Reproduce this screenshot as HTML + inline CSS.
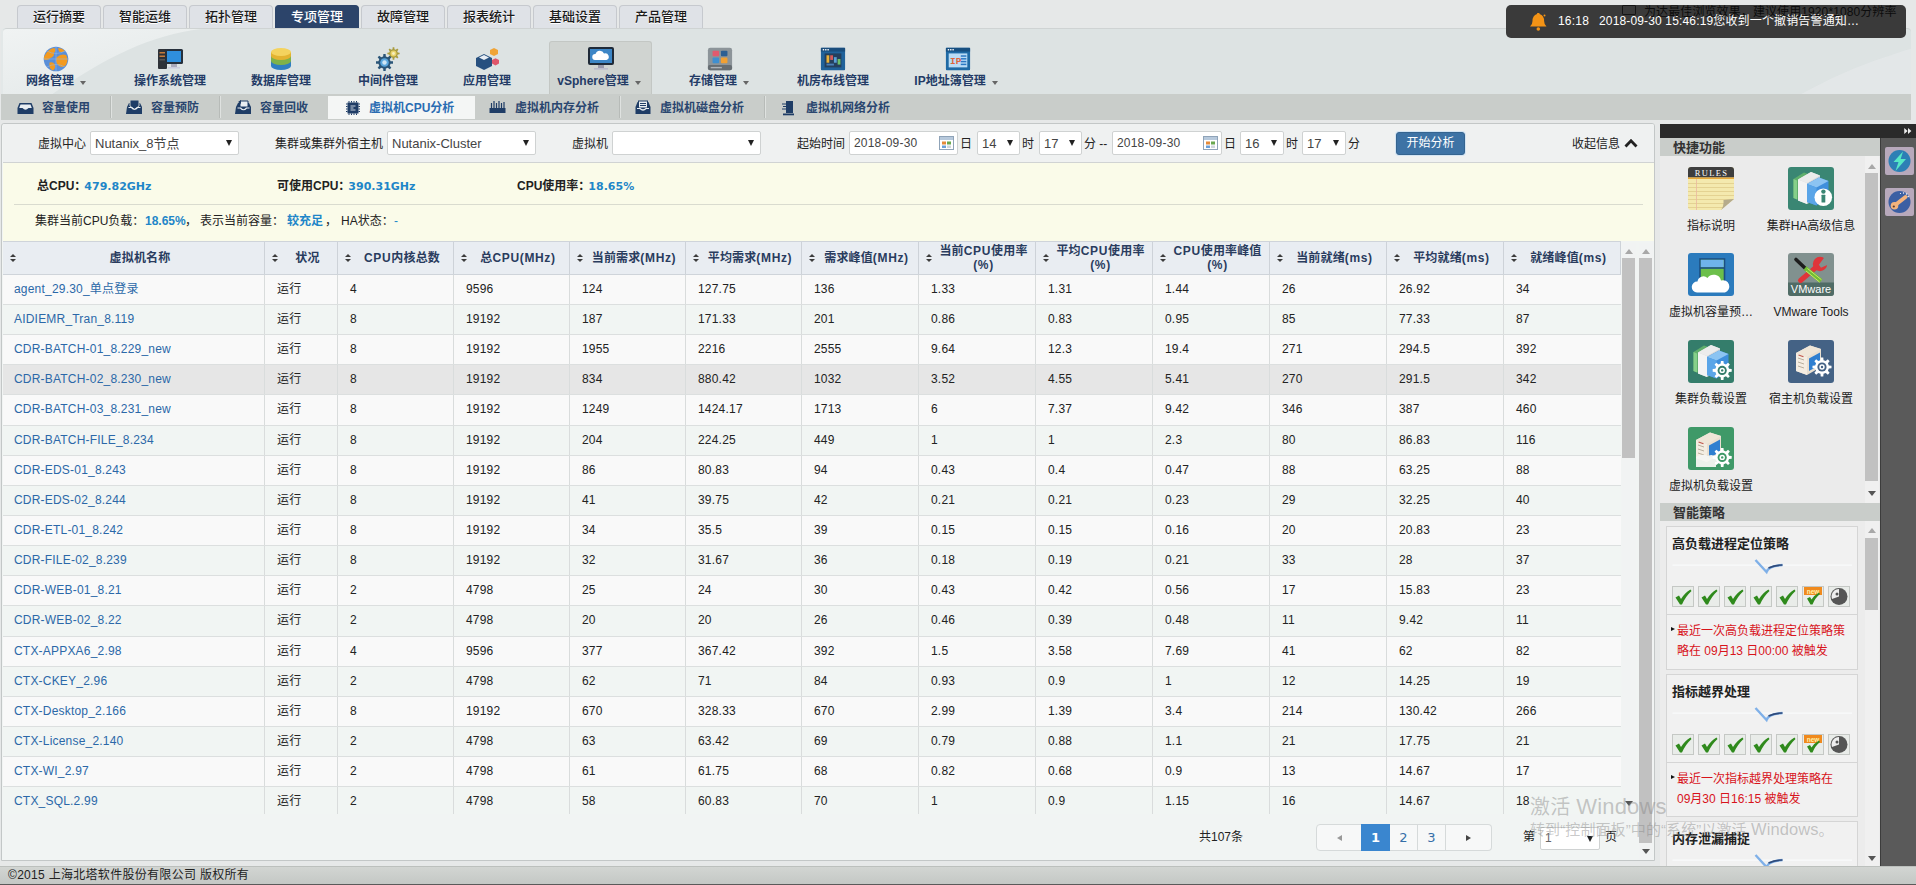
<!DOCTYPE html>
<html lang="zh-CN">
<head>
<meta charset="utf-8">
<title>虚拟机CPU分析</title>
<style>
*{box-sizing:border-box;margin:0;padding:0}
html,body{width:1916px;height:885px;overflow:hidden}
body{position:relative;background:#e6e8e8;font:12px/1.2 "Liberation Sans","Noto Sans CJK SC",sans-serif;color:#222}
.abs{position:absolute}
/* top tabs */
.tab{position:absolute;top:5px;height:23px;width:84px;border:1px solid #c6c9ce;border-bottom:none;border-radius:4px 4px 0 0;background:#dfe2e7;text-align:center;font-size:13px;line-height:22.500px;color:#1a1a1a;font-weight:500;text-shadow:0 1px 0 #fff}
.tab.on{background:#2c446a;border-color:#2c446a;color:#fff;text-shadow:none}
/* menu panel */
#menu{position:absolute;left:3px;top:28px;width:1908px;height:66px;background:#dde3e3;box-shadow:-2px 0 0 #e3e8e8;border-top:1px solid #cfd3d3;border-radius:4px 4px 0 0;overflow:hidden}
#menu .curve{position:absolute;left:-70px;top:-14px;width:580px;height:140px;border-radius:50%;background:#e6eaea;transform:rotate(-14deg);opacity:.8}
.mi{position:absolute;top:0;height:66px;text-align:center;color:#233b66;font-weight:bold;font-size:12px}
.mi .ic{position:absolute;left:50%;top:16px;width:28px;height:28px;margin-left:-14px}
.mi .lb{position:absolute;left:0;right:0;top:44px;white-space:nowrap;line-height:16px}
.mi .ar{display:inline-block;width:0;height:0;border:3px solid transparent;border-top:4px solid #666;margin-left:6px;vertical-align:-3px}
.mi.on{background:#d0d4d1;border:1px solid #c3c7c4;border-bottom:none;border-radius:3px 3px 0 0}
/* subnav */
#sub{position:absolute;left:3px;top:94px;width:1908px;height:26px;background:#c9cdca;box-shadow:-2px 0 0 #c9cdca}
.si{position:absolute;top:1px;height:24px;line-height:26px;color:#2a466f;font-weight:bold;font-size:12px;white-space:nowrap}
.si.on{background:#f4f6f5;color:#2a6cb2}
.si svg{position:absolute;top:5px}
.sep{position:absolute;top:2px;width:1px;height:22px;background:#dfe2e0;border-left:1px solid #b7bbb8;width:2px}
/* main */
#main{position:absolute;left:1px;top:123px;width:1654px;height:738px;background:#f1f4f3;border:1px solid #c3c7c7;border-radius:3px 3px 0 0;overflow:hidden}
#filter{position:absolute;left:0;top:0;width:100%;height:39px;background:#eff1f1;border-bottom:1px solid #d0d3d3}
#filter .lab{position:absolute;top:12px;line-height:16px;white-space:nowrap;color:#222}
.sel{position:absolute;top:7px;height:24px;border:1px solid #cfd2d2;border-radius:2px;background:#fff;line-height:23px;padding-left:4px;color:#444;white-space:nowrap}
.sel:after{content:"";position:absolute;right:6px;top:8px;border:3.5px solid transparent;border-top:6px solid #222;}
.sel.in:after{display:none}
#info{position:absolute;left:0;top:39px;width:100%;height:78px;background:#fafbe9}
#info .l1{position:absolute;top:15px;font-weight:bold;white-space:nowrap;line-height:16px;color:#222}
#info .l1 b{color:#1e86c8;font-family:"DejaVu Sans","Liberation Sans",sans-serif;font-size:11px;margin-left:-2px}#info .l2 b{color:#1e86c8;font-size:12px}
#info hr{position:absolute;left:11px;right:11px;top:41px;border:none;border-top:1px solid #d9dbcf}
#info .l2{position:absolute;top:50px;left:31px;white-space:nowrap;line-height:16px}
.thead{position:absolute;left:0;top:117px;width:1618px;height:34px;background:#e9edf2;border-top:1px solid #cfd4da;border-bottom:1px solid #cfd4da}
.th{position:absolute;top:0;height:32px;border-right:1px solid #cdd2d8;color:#2a3c5e;font-weight:bold;text-align:center;line-height:32px;white-space:nowrap;padding-left:13px;letter-spacing:.15px}
.th.two{line-height:14px;padding-top:2px}
.th span{display:inline-block}.th span.la{display:inline;letter-spacing:.65px}
.sort{position:absolute;left:7px;top:12px;width:7px;height:9px}
.sort:before{content:"";position:absolute;left:0;top:0;border:3.200px solid transparent;border-bottom:3.600px solid #3c3c3c;border-top:none}
.sort:after{content:"";position:absolute;left:0;top:5px;border:3.200px solid transparent;border-top:3.600px solid #3c3c3c;border-bottom:none}
.tr{position:absolute;left:0;width:1618px;border-bottom:1px solid #dcdfdf}
.tr.odd{background:#f9f9f9}.tr.even{background:#f1f5f3}.tr.hov{background:#e6e6e6}
.td{position:absolute;top:0;bottom:0;border-right:1px solid #d9dcdc;padding-left:12px;line-height:29px;white-space:nowrap;color:#222;letter-spacing:.2px}
.td:last-child{border-right:none}
.td.nm{color:#2b68a8;padding-left:11px}
/* scrollbars */
.sb{position:absolute;width:14px;background:#f1f3f3}
.sb .thumb{position:absolute;left:0;width:13px;background:#c1c1c1}
.sb .up,.sb .dn{position:absolute;left:3px;border:4px solid transparent}
.sb .up{border-bottom:5px solid #a8a8a8;border-top:none}
.sb .dn{border-top:5px solid #555;border-bottom:none}
/* pager */
.pg{position:absolute;top:700px;height:27px;border:1px solid #d6dada;background:#f7f8f8;text-align:center;line-height:25px;font-size:13px;font-family:"DejaVu Sans","Liberation Sans",sans-serif;color:#356fa8}
/* right */
#right{position:absolute;left:1660px;top:124px;width:256px;height:742px;background:#ebebeb}
#right .bar{position:absolute;left:0;top:0;width:256px;height:14px;background:#2a2a2a}
#strip{position:absolute;left:220px;top:14px;width:36px;height:728px;background:#5a5a5a;border-left:1px solid #3c3c3c}
.sbtn{position:absolute;left:4px;width:29px;height:29px;background:#b8a9bc;border-radius:2px}
.sec{position:absolute;left:0;width:220px;height:18px;background:#c9cdca;font-weight:bold;color:#333;line-height:19px;padding-left:13px;font-size:13px}
.qi{position:absolute;width:46px;height:43px}
.ql{position:absolute;width:110px;text-align:center;white-space:nowrap;line-height:16px;color:#222}
.card{position:absolute;left:6px;width:192px;background:#f1f1f1;border:1px solid #d5d5d5}
.card .t{position:absolute;left:5px;top:9px;font-size:13px;font-weight:bold;color:#222;white-space:nowrap;line-height:16px}
.card .red{position:absolute;left:10px;color:#d8131b;line-height:20px;white-space:nowrap}
.chk{position:absolute;width:22px;height:21px;background:#e9ece9;border:1px solid #c5c8c5}
#foot{position:absolute;left:0;top:866px;width:1916px;height:19px;background:linear-gradient(#d2d5d2,#c4c8c5);border-top:1px solid #bcc0bd;border-bottom:1px solid #5a5a5a;line-height:16px;padding-left:8px;color:#222;letter-spacing:.3px}
</style>
</head>
<body>
<!-- top tabs -->
<div class="tab" style="left:17px">运行摘要</div>
<div class="tab" style="left:103px">智能运维</div>
<div class="tab" style="left:189px">拓扑管理</div>
<div class="tab on" style="left:275px">专项管理</div>
<div class="tab" style="left:361px">故障管理</div>
<div class="tab" style="left:447px">报表统计</div>
<div class="tab" style="left:533px">基础设置</div>
<div class="tab" style="left:619px">产品管理</div>

<div id="menu"><svg class="abs" style="left:-2px;top:0" width="220" height="66" viewBox="0 0 220 66"><defs><linearGradient id="mg" x1="0" y1="0" x2="0.700" y2="1"><stop offset="0" stop-color="#f0f3f3"/><stop offset="1" stop-color="#e4e9e9"/></linearGradient></defs><path d="M0 0 H200 C150 6 105 28 50 66 H0z" fill="url(#mg)"/></svg><div class="abs" style="left:1530px;top:0;width:1040px;height:1040px;border-radius:50%;background:#e4e7e9;opacity:.85"></div>
<div class="mi" style="left:-7px;width:120px"><svg class="ic" viewBox="0 0 28 28"><circle cx="14" cy="14" r="12.300" fill="#5a8fd8"/><path d="M4 8.500 q3 -5 8.500 -5.500 q2 2.500 -0.500 5 q0.500 3.500 -3.500 5 q-2.500 3 -6.500 1.500 q-0.500 -3 2 -6z M14.500 12.500 q4 -4 9.500 -2.500 q3 4.500 0 10 q-4 3.500 -7.500 0.500 q-3.500 -3.500 -2 -8z M7.500 17.500 q3.500 -1 5.500 2 q0.500 4.500 -2 6 q-4.500 -2 -3.500 -8z M16 3 q4 0 7 3 q-3 2 -6 0.500z" fill="#f39a1f"/><path d="M14 1.700 V26.300 M1.700 14 H26.300 M5 6 Q14 11 23 6 M5 22 Q14 17 23 22" stroke="#8db8ee" stroke-width="0.700" fill="none" opacity="0.800"/></svg><div class="lb">网络管理<i class="ar"></i></div></div>
<div class="mi" style="left:107px;width:120px"><svg class="ic" viewBox="0 0 28 28"><rect x="2" y="4" width="9" height="20" rx="1" fill="#2e3238"/><rect x="3.5" y="7" width="6" height="1.5" fill="#c57a3a"/><rect x="3.5" y="10.5" width="6" height="1.5" fill="#c57a3a"/><rect x="3.5" y="14" width="6" height="1.5" fill="#555"/><rect x="9" y="4" width="18" height="15" rx="1.5" fill="#26303c"/><rect x="11" y="6" width="14" height="11" fill="#2f8fdd"/><rect x="15" y="19" width="6" height="3" fill="#aab"/><rect x="12" y="22" width="12" height="1.5" fill="#ccd"/></svg><div class="lb">操作系统管理</div></div>
<div class="mi" style="left:218px;width:120px"><svg class="ic" viewBox="0 0 28 28"><ellipse cx="14" cy="21" rx="10" ry="4" fill="#2f7fc2"/><rect x="4" y="16" width="20" height="5" fill="#2f7fc2"/><ellipse cx="14" cy="16" rx="10" ry="4" fill="#7fb24a"/><rect x="4" y="11" width="20" height="5" fill="#7fb24a"/><ellipse cx="14" cy="11" rx="10" ry="4" fill="#e3b330"/><rect x="4" y="7" width="20" height="4" fill="#e3b330"/><ellipse cx="14" cy="7" rx="10" ry="4" fill="#f4d35e"/></svg><div class="lb">数据库管理</div></div>
<div class="mi" style="left:325px;width:120px"><svg class="ic" viewBox="0 0 28 28"><path d="M23.79 7.54 L25.64 7.67 L25.64 9.33 L23.79 9.46 L23.22 10.86 L24.43 12.26 L23.26 13.43 L21.86 12.22 L20.46 12.79 L20.33 14.64 L18.67 14.64 L18.54 12.79 L17.14 12.22 L15.74 13.43 L14.57 12.26 L15.78 10.86 L15.21 9.46 L13.36 9.33 L13.36 7.67 L15.21 7.54 L15.78 6.14 L14.57 4.74 L15.74 3.57 L17.14 4.78 L18.54 4.21 L18.67 2.36 L20.33 2.36 L20.46 4.21 L21.86 4.78 L23.26 3.57 L24.43 4.74 L23.22 6.14z" fill="#a99c3f"/><circle cx="19.5" cy="8.500" r="3" fill="#e9d36a"/><circle cx="19.5" cy="8.500" r="1.400" fill="#f6efc0"/><path d="M16.55 16.15 L19.02 16.36 L19.02 18.64 L16.55 18.85 L15.73 20.82 L17.34 22.72 L15.72 24.34 L13.82 22.73 L11.85 23.55 L11.64 26.02 L9.36 26.02 L9.15 23.55 L7.18 22.73 L5.28 24.34 L3.66 22.72 L5.27 20.82 L4.45 18.85 L1.98 18.64 L1.98 16.36 L4.45 16.15 L5.27 14.18 L3.66 12.28 L5.28 10.66 L7.18 12.27 L9.15 11.45 L9.36 8.98 L11.64 8.98 L11.85 11.45 L13.82 12.27 L15.72 10.66 L17.34 12.28 L15.73 14.18z" fill="#2a5578"/><circle cx="10.500" cy="17.500" r="4.300" fill="#5aa6dc"/><circle cx="10.500" cy="17.500" r="2.200" fill="#cfe6f5"/></svg><div class="lb">中间件管理</div></div>
<div class="mi" style="left:424px;width:120px"><svg class="ic" viewBox="0 0 28 28"><path d="M3 13 l8 -4 l8 4 v8 l-8 4 l-8 -4z" fill="#27507f"/><path d="M6 12.5 l5 -2.5 l5 2.5 l-5 2.5z" fill="#e8eef5"/><path d="M17 5 l4 -2 l4 2 v4 l-4 2 l-4 -2z" fill="#f0a437"/><path d="M19 15 l3.500 -1.8 l3.500 1.800 v3.600 l-3.500 1.800 l-3.500 -1.800z" fill="#e0566b"/></svg><div class="lb">应用管理</div></div>
<div class="mi on" style="left:546px;width:103px;top:12px;height:54px"><div style="position:absolute;left:0;right:0;top:-13px;height:66px"><svg class="ic" viewBox="0 0 28 28"><rect x="1" y="2" width="26" height="18" rx="2" fill="#1f2a38"/><rect x="3" y="4" width="22" height="14" fill="#3d86c6"/><path d="M8 15 a3 3 0 0 1 0.500 -6 a4.500 4.500 0 0 1 8.500 -0.500 a3.300 3.300 0 0 1 2.500 6.500z" fill="#fff"/><rect x="11" y="20" width="6" height="3" fill="#99a"/><rect x="7" y="23" width="14" height="1.6" fill="#bbc"/></svg><div class="lb" style="padding-left:0;margin-left:-3px">vSphere管理<i class="ar"></i></div></div></div>
<div class="mi" style="left:656px;width:120px"><svg class="ic" style="transform:translate(1px,0) scale(.93)" viewBox="0 0 28 28"><rect x="1" y="2" width="26" height="24" rx="2.500" fill="#8c9499"/><rect x="6" y="5" width="7" height="6" rx="1" fill="#e25a6e"/><rect x="15" y="5" width="7" height="6" rx="1" fill="#2c5f93"/><rect x="6" y="12.500" width="7" height="6" rx="1" fill="#3f8fd0"/><rect x="15" y="12.500" width="7" height="6" rx="1" fill="#f1a033"/><rect x="1" y="20.500" width="26" height="5.500" rx="2" fill="#666d72"/><rect x="4" y="22.500" width="12" height="1.500" fill="#aeb4b8"/></svg><div class="lb">存储管理<i class="ar"></i></div></div>
<div class="mi" style="left:770px;width:120px"><svg class="ic" style="transform:scale(.93)" viewBox="0 0 28 28"><rect x="1" y="2" width="26" height="24" rx="1" fill="#20629a"/><rect x="1" y="2" width="26" height="4" fill="#1a4d7c"/><rect x="3" y="3.300" width="1.500" height="1.500" fill="#fff"/><rect x="5.500" y="3.300" width="1.500" height="1.500" fill="#fff"/><rect x="8" y="3.300" width="1.500" height="1.500" fill="#fff"/><rect x="5" y="8" width="18" height="15" fill="#253f5c"/><rect x="7" y="10" width="3" height="8" fill="#e8b23a"/><rect x="11" y="10" width="3" height="5" fill="#d65a5a"/><rect x="15" y="12" width="3" height="6" fill="#5aa0d6"/><rect x="19" y="14" width="3" height="6" fill="#6abf6a"/><rect x="7" y="19" width="8" height="2" fill="#4a7fb5"/></svg><div class="lb">机房布线管理</div></div>
<div class="mi" style="left:893px;width:120px"><svg class="ic" style="transform:translate(2px,0) scale(.93)" viewBox="0 0 28 28"><rect x="1" y="2" width="26" height="24" rx="1" fill="#1f6aa5"/><rect x="1" y="2" width="26" height="4" fill="#174f80"/><rect x="3" y="3.300" width="1.500" height="1.500" fill="#fff"/><rect x="5.500" y="3.300" width="1.500" height="1.500" fill="#fff"/><rect x="8" y="3.300" width="1.500" height="1.500" fill="#fff"/><rect x="4" y="8" width="20" height="15" fill="#b9dcf6"/><text x="5.500" y="19.500" font-family="Liberation Mono,monospace" font-size="10" font-weight="bold" fill="#e0643a">IP</text><rect x="17" y="10" width="6" height="1.600" fill="#2b78c2"/><rect x="17" y="13" width="6" height="1.600" fill="#2b78c2"/><rect x="17" y="16" width="6" height="1.600" fill="#2b78c2"/><rect x="17" y="19" width="6" height="1.600" fill="#2b78c2"/></svg><div class="lb">IP地址簿管理<i class="ar"></i></div></div>
</div>
<div id="sub">
<div class="si on" style="left:325px;width:147px;top:2px;height:23px"></div>
<div class="si" style="left:0;width:0;"><svg width="17" height="15" viewBox="0 0 17 15" style="left:14px"><path d="M2.500 3 h12 l2 5 v6 h-16 v-6z" fill="#1f3d66"/><path d="M3.500 4.500 h10 l1.300 3.500 h-3.300 q-3 3.500 -6 0 h-3.300z" fill="#e9eef2"/></svg><span style="position:absolute;left:39px;top:0">容量使用</span></div>
<div class="si" style="left:0;width:0;"><svg width="17" height="16" viewBox="0 0 17 16" style="left:123px;top:4px"><path d="M1 8 l2 -4 h11 l2 4 v7 h-16z" fill="#1f3d66"/><path d="M4 1 h9 v6 l-4.500 3.500 l-4.500 -3.500z" fill="#1f3d66" stroke="#c9cdca" stroke-width="1"/><path d="M2.500 8.500 h3 q3 3.500 6 0 h3" fill="none" stroke="#e9eef2" stroke-width="1.200"/></svg><span style="position:absolute;left:148px;top:0">容量预防</span></div>
<div class="si" style="left:0;width:0;"><svg width="17" height="16" viewBox="0 0 17 16" style="left:232px;top:4px"><path d="M1 8 l2 -4 h11 l2 4 v7 h-16z" fill="#1f3d66"/><path d="M5 2 h8 v6 h-8z" fill="#e9eef2" stroke="#1f3d66" stroke-width="1"/><path d="M3 3 l3 -2 v4z" fill="#1f3d66"/><path d="M2.500 9 h3 q3 3.500 6 0 h3" fill="none" stroke="#e9eef2" stroke-width="1.200"/></svg><span style="position:absolute;left:257px;top:0">容量回收</span></div>
<div class="si on" style="left:0;width:0;background:none;"><svg width="16" height="16" viewBox="0 0 16 16" style="left:342px"><rect x="2.500" y="2.500" width="11" height="11" fill="#1f3d66"/><path d="M1 4h1.500M1 6.500h1.500M1 9h1.500M1 11.500h1.500M13.500 4h1.500M13.500 6.500h1.500M13.500 9h1.500M13.500 11.500h1.500M4 1v1.500M6.500 1v1.500M9 1v1.500M11.500 1v1.500M4 13.500v1.500M6.500 13.500v1.500M9 13.500v1.500M11.500 13.500v1.500" stroke="#1f3d66" stroke-width="1"/><path d="M5.500 6h5M5.500 8h3M5.500 10h5" stroke="#dfe6ee" stroke-width="0.900"/></svg><span style="position:absolute;left:366px;top:0">虚拟机CPU分析</span></div>
<div class="si" style="left:0;width:0;"><svg width="17" height="15" viewBox="0 0 17 15" style="left:486px;top:5px"><rect x="0.500" y="8" width="16" height="5" fill="#1f3d66"/><path d="M2.500 3v5M5 1v7M7.500 3v5M10 1v7M12.500 3v5M15 2v6" stroke="#1f3d66" stroke-width="1.200"/></svg><span style="position:absolute;left:512px;top:0">虚拟机内存分析</span></div>
<div class="si" style="left:0;width:0;"><svg width="16" height="15" viewBox="0 0 16 15" style="left:632px"><path d="M0.500 7 l2 -5 h11 l2 5 v7 h-15z" fill="#1f3d66"/><rect x="3.500" y="1" width="9" height="7" fill="#e9eef2" stroke="#1f3d66"/><path d="M5 3.500h6M5 5.500h6" stroke="#1f3d66" stroke-width="1"/><path d="M2 8.500 h3 q3 3 6 0 h3" fill="none" stroke="#e9eef2" stroke-width="1.200"/></svg><span style="position:absolute;left:657px;top:0">虚拟机磁盘分析</span></div>
<div class="si" style="left:0;width:0;"><svg width="14" height="16" viewBox="0 0 14 16" style="left:778px"><rect x="5" y="1" width="7" height="12" fill="#1f3d66"/><path d="M1 4h4M2 6.500h3M1 9h4" stroke="#1f3d66" stroke-width="1"/><rect x="2" y="13.500" width="11" height="1.800" fill="#1f3d66"/></svg><span style="position:absolute;left:803px;top:0">虚拟机网络分析</span></div>
<div class="sep" style="left:107px"></div>
<div class="sep" style="left:216px"></div>
<div class="sep" style="left:616px"></div>
<div class="sep" style="left:761px"></div>
</div>

<div id="main"><div class="abs" style="left:1px;top:0;width:1651px;height:736px">
<div id="filter">
<div class="lab" style="left:35px">虚拟中心</div>
<div class="sel" style="left:87px;width:149px;font-size:13px">Nutanix_8节点</div>
<div class="lab" style="left:272px">集群或集群外宿主机</div>
<div class="sel" style="left:384px;width:149px;font-size:13px">Nutanix-Cluster</div>
<div class="lab" style="left:569px">虚拟机</div>
<div class="sel" style="left:609px;width:149px;font-size:13px"></div>
<div class="lab" style="left:794px">起始时间</div>
<div class="sel in" style="left:846px;width:109px;font-size:12px;letter-spacing:.2px">2018-09-30<svg width="15" height="14" viewBox="0 0 15 14" style="position:absolute;right:3px;top:4px"><rect x="0.500" y="0.500" width="14" height="13" fill="#fff" stroke="#8fa3b8"/><rect x="1" y="1" width="13" height="3" fill="#b7c9dc"/><rect x="3" y="5.500" width="4" height="3" fill="#e58b3a"/><rect x="8" y="5.500" width="4" height="3" fill="#6aa84f"/><rect x="3" y="9.500" width="4" height="2.500" fill="#6a9fd8"/><rect x="8" y="9.500" width="4" height="2.500" fill="#d0d6dc"/></svg></div>
<div class="lab" style="left:957px">日</div>
<div class="sel" style="left:974px;width:43px;font-size:13px">14</div>
<div class="lab" style="left:1019px">时</div>
<div class="sel" style="left:1036px;width:43px;font-size:13px">17</div>
<div class="lab" style="left:1081px">分 --</div>
<div class="sel in" style="left:1109px;width:110px;font-size:12px;letter-spacing:.2px">2018-09-30<svg width="15" height="14" viewBox="0 0 15 14" style="position:absolute;right:3px;top:4px"><rect x="0.500" y="0.500" width="14" height="13" fill="#fff" stroke="#8fa3b8"/><rect x="1" y="1" width="13" height="3" fill="#b7c9dc"/><rect x="3" y="5.500" width="4" height="3" fill="#e58b3a"/><rect x="8" y="5.500" width="4" height="3" fill="#6aa84f"/><rect x="3" y="9.500" width="4" height="2.500" fill="#6a9fd8"/><rect x="8" y="9.500" width="4" height="2.500" fill="#d0d6dc"/></svg></div>
<div class="lab" style="left:1221px">日</div>
<div class="sel" style="left:1237px;width:44px;font-size:13px">16</div>
<div class="lab" style="left:1283px">时</div>
<div class="sel" style="left:1299px;width:44px;font-size:13px">17</div>
<div class="lab" style="left:1345px">分</div>
<div class="abs" style="left:1393px;top:8px;width:69px;height:23px;background:#3e73a5;border:1px solid #35648f;border-radius:3px;box-shadow:0 0 0 1px #d3e4f3;color:#fff;text-align:center;line-height:21px;font-size:12px">开始分析</div>
<div class="lab" style="left:1569px">收起信息</div>
<svg class="abs" style="left:1621px;top:14px" width="14" height="10" viewBox="0 0 14 10"><path d="M1.500 8.500 L7 2.800 L12.500 8.500" fill="none" stroke="#222" stroke-width="2.800"/></svg>
</div>
<div id="info">
<div class="l1" style="left:34px">总CPU：<b>479.82GHz</b></div>
<div class="l1" style="left:274px">可使用CPU：<b>390.31GHz</b></div>
<div class="l1" style="left:514px">CPU使用率：<b>18.65%</b></div>
<hr>
<div class="l2" style="left:0;top:50px"><span class="abs" style="left:32px">集群当前CPU负载：</span><b class="abs" style="left:142px">18.65%</b><span class="abs" style="left:182px">，</span><span class="abs" style="left:197px">表示当前容量：</span><b class="abs" style="left:284px">较充足</b><span class="abs" style="left:322px">，</span><span class="abs" style="left:338px">HA状态：</span><span class="abs" style="left:391px;color:#1e86c8">-</span></div>
</div>
<div class="thead">
<div class="th" style="left:0px;width:262px"><i class="sort"></i><span>虚拟机名称</span></div>
<div class="th" style="left:262px;width:73px"><i class="sort"></i><span>状况</span></div>
<div class="th" style="left:335px;width:116px"><i class="sort"></i><span><span class="la">CPU</span>内核总数</span></div>
<div class="th" style="left:451px;width:116px"><i class="sort"></i><span>总<span class="la">CPU(MHz)</span></span></div>
<div class="th" style="left:567px;width:116px"><i class="sort"></i><span>当前需求<span class="la">(MHz)</span></span></div>
<div class="th" style="left:683px;width:116px"><i class="sort"></i><span>平均需求<span class="la">(MHz)</span></span></div>
<div class="th" style="left:799px;width:117px"><i class="sort"></i><span>需求峰值<span class="la">(MHz)</span></span></div>
<div class="th two" style="left:916px;width:117px"><i class="sort"></i><span>当前<span class="la">CPU</span>使用率<br><span class="la">(%)</span></span></div>
<div class="th two" style="left:1033px;width:117px"><i class="sort"></i><span>平均<span class="la">CPU</span>使用率<br><span class="la">(%)</span></span></div>
<div class="th two" style="left:1150px;width:117px"><i class="sort"></i><span><span class="la">CPU</span>使用率峰值<br><span class="la">(%)</span></span></div>
<div class="th" style="left:1267px;width:117px"><i class="sort"></i><span>当前就绪<span class="la">(ms)</span></span></div>
<div class="th" style="left:1384px;width:117px"><i class="sort"></i><span>平均就绪<span class="la">(ms)</span></span></div>
<div class="th" style="left:1501px;width:117px"><i class="sort"></i><span>就绪峰值<span class="la">(ms)</span></span></div>
</div>
<div class="tr odd" style="top:151px;height:30px">
<div class="td nm" style="left:0px;width:262px">agent_29.30_单点登录</div>
<div class="td" style="left:262px;width:73px">运行</div>
<div class="td" style="left:335px;width:116px">4</div>
<div class="td" style="left:451px;width:116px">9596</div>
<div class="td" style="left:567px;width:116px">124</div>
<div class="td" style="left:683px;width:116px">127.75</div>
<div class="td" style="left:799px;width:117px">136</div>
<div class="td" style="left:916px;width:117px">1.33</div>
<div class="td" style="left:1033px;width:117px">1.31</div>
<div class="td" style="left:1150px;width:117px">1.44</div>
<div class="td" style="left:1267px;width:117px">26</div>
<div class="td" style="left:1384px;width:117px">26.92</div>
<div class="td" style="left:1501px;width:117px">34</div>
</div>
<div class="tr even" style="top:181px;height:30px">
<div class="td nm" style="left:0px;width:262px">AIDIEMR_Tran_8.119</div>
<div class="td" style="left:262px;width:73px">运行</div>
<div class="td" style="left:335px;width:116px">8</div>
<div class="td" style="left:451px;width:116px">19192</div>
<div class="td" style="left:567px;width:116px">187</div>
<div class="td" style="left:683px;width:116px">171.33</div>
<div class="td" style="left:799px;width:117px">201</div>
<div class="td" style="left:916px;width:117px">0.86</div>
<div class="td" style="left:1033px;width:117px">0.83</div>
<div class="td" style="left:1150px;width:117px">0.95</div>
<div class="td" style="left:1267px;width:117px">85</div>
<div class="td" style="left:1384px;width:117px">77.33</div>
<div class="td" style="left:1501px;width:117px">87</div>
</div>
<div class="tr odd" style="top:211px;height:30px">
<div class="td nm" style="left:0px;width:262px">CDR-BATCH-01_8.229_new</div>
<div class="td" style="left:262px;width:73px">运行</div>
<div class="td" style="left:335px;width:116px">8</div>
<div class="td" style="left:451px;width:116px">19192</div>
<div class="td" style="left:567px;width:116px">1955</div>
<div class="td" style="left:683px;width:116px">2216</div>
<div class="td" style="left:799px;width:117px">2555</div>
<div class="td" style="left:916px;width:117px">9.64</div>
<div class="td" style="left:1033px;width:117px">12.3</div>
<div class="td" style="left:1150px;width:117px">19.4</div>
<div class="td" style="left:1267px;width:117px">271</div>
<div class="td" style="left:1384px;width:117px">294.5</div>
<div class="td" style="left:1501px;width:117px">392</div>
</div>
<div class="tr hov" style="top:241px;height:30px">
<div class="td nm" style="left:0px;width:262px">CDR-BATCH-02_8.230_new</div>
<div class="td" style="left:262px;width:73px">运行</div>
<div class="td" style="left:335px;width:116px">8</div>
<div class="td" style="left:451px;width:116px">19192</div>
<div class="td" style="left:567px;width:116px">834</div>
<div class="td" style="left:683px;width:116px">880.42</div>
<div class="td" style="left:799px;width:117px">1032</div>
<div class="td" style="left:916px;width:117px">3.52</div>
<div class="td" style="left:1033px;width:117px">4.55</div>
<div class="td" style="left:1150px;width:117px">5.41</div>
<div class="td" style="left:1267px;width:117px">270</div>
<div class="td" style="left:1384px;width:117px">291.5</div>
<div class="td" style="left:1501px;width:117px">342</div>
</div>
<div class="tr odd" style="top:271px;height:31px">
<div class="td nm" style="left:0px;width:262px">CDR-BATCH-03_8.231_new</div>
<div class="td" style="left:262px;width:73px">运行</div>
<div class="td" style="left:335px;width:116px">8</div>
<div class="td" style="left:451px;width:116px">19192</div>
<div class="td" style="left:567px;width:116px">1249</div>
<div class="td" style="left:683px;width:116px">1424.17</div>
<div class="td" style="left:799px;width:117px">1713</div>
<div class="td" style="left:916px;width:117px">6</div>
<div class="td" style="left:1033px;width:117px">7.37</div>
<div class="td" style="left:1150px;width:117px">9.42</div>
<div class="td" style="left:1267px;width:117px">346</div>
<div class="td" style="left:1384px;width:117px">387</div>
<div class="td" style="left:1501px;width:117px">460</div>
</div>
<div class="tr even" style="top:302px;height:30px">
<div class="td nm" style="left:0px;width:262px">CDR-BATCH-FILE_8.234</div>
<div class="td" style="left:262px;width:73px">运行</div>
<div class="td" style="left:335px;width:116px">8</div>
<div class="td" style="left:451px;width:116px">19192</div>
<div class="td" style="left:567px;width:116px">204</div>
<div class="td" style="left:683px;width:116px">224.25</div>
<div class="td" style="left:799px;width:117px">449</div>
<div class="td" style="left:916px;width:117px">1</div>
<div class="td" style="left:1033px;width:117px">1</div>
<div class="td" style="left:1150px;width:117px">2.3</div>
<div class="td" style="left:1267px;width:117px">80</div>
<div class="td" style="left:1384px;width:117px">86.83</div>
<div class="td" style="left:1501px;width:117px">116</div>
</div>
<div class="tr odd" style="top:332px;height:30px">
<div class="td nm" style="left:0px;width:262px">CDR-EDS-01_8.243</div>
<div class="td" style="left:262px;width:73px">运行</div>
<div class="td" style="left:335px;width:116px">8</div>
<div class="td" style="left:451px;width:116px">19192</div>
<div class="td" style="left:567px;width:116px">86</div>
<div class="td" style="left:683px;width:116px">80.83</div>
<div class="td" style="left:799px;width:117px">94</div>
<div class="td" style="left:916px;width:117px">0.43</div>
<div class="td" style="left:1033px;width:117px">0.4</div>
<div class="td" style="left:1150px;width:117px">0.47</div>
<div class="td" style="left:1267px;width:117px">88</div>
<div class="td" style="left:1384px;width:117px">63.25</div>
<div class="td" style="left:1501px;width:117px">88</div>
</div>
<div class="tr even" style="top:362px;height:30px">
<div class="td nm" style="left:0px;width:262px">CDR-EDS-02_8.244</div>
<div class="td" style="left:262px;width:73px">运行</div>
<div class="td" style="left:335px;width:116px">8</div>
<div class="td" style="left:451px;width:116px">19192</div>
<div class="td" style="left:567px;width:116px">41</div>
<div class="td" style="left:683px;width:116px">39.75</div>
<div class="td" style="left:799px;width:117px">42</div>
<div class="td" style="left:916px;width:117px">0.21</div>
<div class="td" style="left:1033px;width:117px">0.21</div>
<div class="td" style="left:1150px;width:117px">0.23</div>
<div class="td" style="left:1267px;width:117px">29</div>
<div class="td" style="left:1384px;width:117px">32.25</div>
<div class="td" style="left:1501px;width:117px">40</div>
</div>
<div class="tr odd" style="top:392px;height:30px">
<div class="td nm" style="left:0px;width:262px">CDR-ETL-01_8.242</div>
<div class="td" style="left:262px;width:73px">运行</div>
<div class="td" style="left:335px;width:116px">8</div>
<div class="td" style="left:451px;width:116px">19192</div>
<div class="td" style="left:567px;width:116px">34</div>
<div class="td" style="left:683px;width:116px">35.5</div>
<div class="td" style="left:799px;width:117px">39</div>
<div class="td" style="left:916px;width:117px">0.15</div>
<div class="td" style="left:1033px;width:117px">0.15</div>
<div class="td" style="left:1150px;width:117px">0.16</div>
<div class="td" style="left:1267px;width:117px">20</div>
<div class="td" style="left:1384px;width:117px">20.83</div>
<div class="td" style="left:1501px;width:117px">23</div>
</div>
<div class="tr even" style="top:422px;height:30px">
<div class="td nm" style="left:0px;width:262px">CDR-FILE-02_8.239</div>
<div class="td" style="left:262px;width:73px">运行</div>
<div class="td" style="left:335px;width:116px">8</div>
<div class="td" style="left:451px;width:116px">19192</div>
<div class="td" style="left:567px;width:116px">32</div>
<div class="td" style="left:683px;width:116px">31.67</div>
<div class="td" style="left:799px;width:117px">36</div>
<div class="td" style="left:916px;width:117px">0.18</div>
<div class="td" style="left:1033px;width:117px">0.19</div>
<div class="td" style="left:1150px;width:117px">0.21</div>
<div class="td" style="left:1267px;width:117px">33</div>
<div class="td" style="left:1384px;width:117px">28</div>
<div class="td" style="left:1501px;width:117px">37</div>
</div>
<div class="tr odd" style="top:452px;height:30px">
<div class="td nm" style="left:0px;width:262px">CDR-WEB-01_8.21</div>
<div class="td" style="left:262px;width:73px">运行</div>
<div class="td" style="left:335px;width:116px">2</div>
<div class="td" style="left:451px;width:116px">4798</div>
<div class="td" style="left:567px;width:116px">25</div>
<div class="td" style="left:683px;width:116px">24</div>
<div class="td" style="left:799px;width:117px">30</div>
<div class="td" style="left:916px;width:117px">0.43</div>
<div class="td" style="left:1033px;width:117px">0.42</div>
<div class="td" style="left:1150px;width:117px">0.56</div>
<div class="td" style="left:1267px;width:117px">17</div>
<div class="td" style="left:1384px;width:117px">15.83</div>
<div class="td" style="left:1501px;width:117px">23</div>
</div>
<div class="tr even" style="top:482px;height:31px">
<div class="td nm" style="left:0px;width:262px">CDR-WEB-02_8.22</div>
<div class="td" style="left:262px;width:73px">运行</div>
<div class="td" style="left:335px;width:116px">2</div>
<div class="td" style="left:451px;width:116px">4798</div>
<div class="td" style="left:567px;width:116px">20</div>
<div class="td" style="left:683px;width:116px">20</div>
<div class="td" style="left:799px;width:117px">26</div>
<div class="td" style="left:916px;width:117px">0.46</div>
<div class="td" style="left:1033px;width:117px">0.39</div>
<div class="td" style="left:1150px;width:117px">0.48</div>
<div class="td" style="left:1267px;width:117px">11</div>
<div class="td" style="left:1384px;width:117px">9.42</div>
<div class="td" style="left:1501px;width:117px">11</div>
</div>
<div class="tr odd" style="top:513px;height:30px">
<div class="td nm" style="left:0px;width:262px">CTX-APPXA6_2.98</div>
<div class="td" style="left:262px;width:73px">运行</div>
<div class="td" style="left:335px;width:116px">4</div>
<div class="td" style="left:451px;width:116px">9596</div>
<div class="td" style="left:567px;width:116px">377</div>
<div class="td" style="left:683px;width:116px">367.42</div>
<div class="td" style="left:799px;width:117px">392</div>
<div class="td" style="left:916px;width:117px">1.5</div>
<div class="td" style="left:1033px;width:117px">3.58</div>
<div class="td" style="left:1150px;width:117px">7.69</div>
<div class="td" style="left:1267px;width:117px">41</div>
<div class="td" style="left:1384px;width:117px">62</div>
<div class="td" style="left:1501px;width:117px">82</div>
</div>
<div class="tr even" style="top:543px;height:30px">
<div class="td nm" style="left:0px;width:262px">CTX-CKEY_2.96</div>
<div class="td" style="left:262px;width:73px">运行</div>
<div class="td" style="left:335px;width:116px">2</div>
<div class="td" style="left:451px;width:116px">4798</div>
<div class="td" style="left:567px;width:116px">62</div>
<div class="td" style="left:683px;width:116px">71</div>
<div class="td" style="left:799px;width:117px">84</div>
<div class="td" style="left:916px;width:117px">0.93</div>
<div class="td" style="left:1033px;width:117px">0.9</div>
<div class="td" style="left:1150px;width:117px">1</div>
<div class="td" style="left:1267px;width:117px">12</div>
<div class="td" style="left:1384px;width:117px">14.25</div>
<div class="td" style="left:1501px;width:117px">19</div>
</div>
<div class="tr odd" style="top:573px;height:30px">
<div class="td nm" style="left:0px;width:262px">CTX-Desktop_2.166</div>
<div class="td" style="left:262px;width:73px">运行</div>
<div class="td" style="left:335px;width:116px">8</div>
<div class="td" style="left:451px;width:116px">19192</div>
<div class="td" style="left:567px;width:116px">670</div>
<div class="td" style="left:683px;width:116px">328.33</div>
<div class="td" style="left:799px;width:117px">670</div>
<div class="td" style="left:916px;width:117px">2.99</div>
<div class="td" style="left:1033px;width:117px">1.39</div>
<div class="td" style="left:1150px;width:117px">3.4</div>
<div class="td" style="left:1267px;width:117px">214</div>
<div class="td" style="left:1384px;width:117px">130.42</div>
<div class="td" style="left:1501px;width:117px">266</div>
</div>
<div class="tr even" style="top:603px;height:30px">
<div class="td nm" style="left:0px;width:262px">CTX-License_2.140</div>
<div class="td" style="left:262px;width:73px">运行</div>
<div class="td" style="left:335px;width:116px">2</div>
<div class="td" style="left:451px;width:116px">4798</div>
<div class="td" style="left:567px;width:116px">63</div>
<div class="td" style="left:683px;width:116px">63.42</div>
<div class="td" style="left:799px;width:117px">69</div>
<div class="td" style="left:916px;width:117px">0.79</div>
<div class="td" style="left:1033px;width:117px">0.88</div>
<div class="td" style="left:1150px;width:117px">1.1</div>
<div class="td" style="left:1267px;width:117px">21</div>
<div class="td" style="left:1384px;width:117px">17.75</div>
<div class="td" style="left:1501px;width:117px">21</div>
</div>
<div class="tr odd" style="top:633px;height:30px">
<div class="td nm" style="left:0px;width:262px">CTX-WI_2.97</div>
<div class="td" style="left:262px;width:73px">运行</div>
<div class="td" style="left:335px;width:116px">2</div>
<div class="td" style="left:451px;width:116px">4798</div>
<div class="td" style="left:567px;width:116px">61</div>
<div class="td" style="left:683px;width:116px">61.75</div>
<div class="td" style="left:799px;width:117px">68</div>
<div class="td" style="left:916px;width:117px">0.82</div>
<div class="td" style="left:1033px;width:117px">0.68</div>
<div class="td" style="left:1150px;width:117px">0.9</div>
<div class="td" style="left:1267px;width:117px">13</div>
<div class="td" style="left:1384px;width:117px">14.67</div>
<div class="td" style="left:1501px;width:117px">17</div>
</div>
<div class="tr even" style="top:663px;height:27px;border-bottom:none">
<div class="td nm" style="left:0px;width:262px">CTX_SQL.2.99</div>
<div class="td" style="left:262px;width:73px">运行</div>
<div class="td" style="left:335px;width:116px">2</div>
<div class="td" style="left:451px;width:116px">4798</div>
<div class="td" style="left:567px;width:116px">58</div>
<div class="td" style="left:683px;width:116px">60.83</div>
<div class="td" style="left:799px;width:117px">70</div>
<div class="td" style="left:916px;width:117px">1</div>
<div class="td" style="left:1033px;width:117px">0.9</div>
<div class="td" style="left:1150px;width:117px">1.15</div>
<div class="td" style="left:1267px;width:117px">16</div>
<div class="td" style="left:1384px;width:117px">14.67</div>
<div class="td" style="left:1501px;width:117px">18</div>
</div>
<div class="abs" style="left:1196px;top:705px;line-height:16px;color:#222;white-space:nowrap">共107条</div>
<div class="pg" style="left:1313px;width:46px;border-radius:4px 0 0 4px"><i style="display:inline-block;border:3.500px solid transparent;border-right:5px solid #999;border-left:none;vertical-align:1px"></i></div>
<div class="pg" style="left:1358px;width:29px;background:#3a86cf;border-color:#3a86cf;color:#fff;font-weight:bold">1</div>
<div class="pg" style="left:1387px;width:28px;border-left:none">2</div>
<div class="pg" style="left:1415px;width:28px;border-left:none">3</div>
<div class="pg" style="left:1443px;width:46px;border-left:none;border-radius:0 4px 4px 0"><i style="display:inline-block;border:3.500px solid transparent;border-left:5px solid #444;border-right:none;vertical-align:1px"></i></div>
<div class="abs" style="left:1520px;top:705px;line-height:16px">第</div>
<div class="sel" style="left:1537px;top:703px;width:60px;height:23px;font-size:12px;line-height:20px;color:#666">1</div>
<div class="abs" style="left:1602px;top:705px;line-height:16px">页</div>
<div class="sb" style="left:1619px;top:119px;height:577px"><i class="up" style="top:6px"></i><div class="thumb" style="top:15px;height:200px"></div><i class="dn" style="top:558px"></i></div>
<div class="sb" style="left:1636px;top:119px;height:617px"><i class="up" style="top:6px"></i><div class="thumb" style="top:15px;height:585px"></div><i class="dn" style="top:606px"></i></div>
</div></div>

<div id="right">
<div class="bar"></div>
<svg class="abs" style="left:244px;top:4px" width="8" height="6" viewBox="0 0 10 8"><path d="M0 0 L4.500 4 L0 8z M5 0 L9.500 4 L5 8z" fill="#eee"/></svg>
<div id="strip">
<div class="sbtn" style="top:9px;height:28px"><svg width="29" height="28" viewBox="0 0.500 29 28"><circle cx="14.500" cy="14.500" r="11" fill="#2d7fb5"/><path d="M18 5 L8.500 15.500 h5 L10.500 24.500 L21 12.500 h-5.300z" fill="#56e8c6"/></svg></div>
<div class="sbtn" style="top:50px;height:28px"><svg width="29" height="28" viewBox="0 0.500 29 28"><circle cx="14.500" cy="14.500" r="11" fill="#3b5fa3"/><circle cx="9.500" cy="18.300" r="3.800" fill="#f4b37c"/><path d="M11.500 16.500 L20.500 9.500" stroke="#f4b37c" stroke-width="4" stroke-linecap="round"/><circle cx="8.800" cy="19" r="1.100" fill="#5a3a2a"/><circle cx="21.500" cy="6.500" r="0.800" fill="#fff"/><circle cx="18.500" cy="5.500" r="0.700" fill="#fff"/><circle cx="15.500" cy="6" r="0.600" fill="#fff"/><circle cx="23.200" cy="9" r="0.700" fill="#fff"/></svg></div>
</div>
<div class="sec" style="top:14px">快捷功能</div>
<svg class="qi" style="left:28px;top:43px" viewBox="0 0 46 43"><rect x="0" y="0" width="46" height="43" rx="3" fill="#f4e9ae"/><path d="M0 3 a3 3 0 0 1 3 -3 h40 a3 3 0 0 1 3 3 v7.500 h-46z" fill="#3e3e3e"/><rect x="0" y="10.500" width="46" height="1.500" fill="#eaa93a"/><text x="23.500" y="8.600" text-anchor="middle" font-family="Liberation Serif,serif" font-size="8.500" fill="#fff" letter-spacing="1.300">RULES</text><path d="M0 16.500h46M0 20.500h46M0 24.500h46M0 28.500h46M0 32.500h46M0 36.500h46M0 40.500h46" stroke="#e0cc8a" stroke-width="0.800"/><path d="M8.500 12v31" stroke="#eab9a0" stroke-width="0.800"/><path d="M46 32 v11 h-13z" fill="#ebebeb"/><path d="M46 32 L35.500 33 q0.500 6 -2.500 10z" fill="#b5ab8c"/></svg>
<svg class="qi" style="left:128px;top:43px" viewBox="0 0 46 43"><rect width="46" height="43" rx="3" fill="#3a8673"/><path d="M5.500 12 L16 5.500 L23 8 V27 L12 33.500 L5.500 31z" fill="#5fae6c"/><path d="M5.500 12 L9 13.500 V32.500 L5.500 31z" fill="#86cf8a"/><path d="M10 12.500 L23 5 L32 8.500 V30 L19 37 L10 33.500z" fill="#d9d9d9"/><path d="M10 12.500 L19 16 V37 L10 33.500z" fill="#f3f3f3"/><path d="M10 12.500 L23 5 L32 8.500 L19 16z" fill="#ececec"/><path d="M19 17 L31 10.500 L40.500 14 V31 L28.500 38.500 L19 35z" fill="#3f8fdc"/><path d="M19 17 L31 10.500 L40.500 14 L28.500 20.500z" fill="#8cc4f2"/><path d="M19 17 L28.500 20.500 V38.500 L19 35z" fill="#5aa5e8"/><circle cx="35.300" cy="30.200" r="8.800" fill="#fff"/><rect x="33.500" y="27.800" width="3.800" height="7.600" rx="0.500" fill="#3a8673"/><circle cx="35.400" cy="24.600" r="2.200" fill="#3a8673"/></svg>
<svg class="qi" style="left:28px;top:129px" viewBox="0 0 46 43"><rect width="46" height="43" rx="3" fill="#2b7bbd"/><rect x="12" y="6" width="24.500" height="28" fill="#6cbf4a" stroke="#1d4f82" stroke-width="1.600"/><rect x="12.800" y="6.800" width="22.900" height="7.500" fill="#6fb3ea"/><path d="M12 15h24.500" stroke="#1d4f82" stroke-width="1.600"/><path d="M9 39.500 a5.500 5.500 0 0 1 0.500 -11 a6 6 0 0 1 10 -3.500 a7.500 7.500 0 0 1 13.500 2.500 a6 6 0 0 1 4 12z" fill="#fff"/></svg>
<svg class="qi" style="left:128px;top:129px" viewBox="0 0 46 43"><rect width="46" height="43" rx="3" fill="#81918f"/><path d="M0 29.500 h46 v10.500 a3 3 0 0 1 -3 3 h-40 a3 3 0 0 1 -3 -3z" fill="#506c66"/><path d="M12.500 27.500 L29 13.500" stroke="#e0353a" stroke-width="5" stroke-linecap="round"/><circle cx="32" cy="11" r="7.200" fill="#e0353a"/><path d="M31 12 L37 1 L44 8 L33.500 14.500z" fill="#81918f" transform="rotate(8 32 11)"/><path d="M8 6.500 L18 16" stroke="#1d1d1d" stroke-width="3.600" stroke-linecap="round"/><path d="M17 15 L33 28" stroke="#6fbe36" stroke-width="4.600" stroke-linecap="butt"/><path d="M19.500 15.500 L33.500 26.800 M18 18 L31.500 29" stroke="#d8e86a" stroke-width="0.900"/><text x="23" y="40" text-anchor="middle" font-family="Liberation Sans,sans-serif" font-size="11" fill="#fff">VMware</text></svg>
<svg class="qi" style="left:28px;top:216px" viewBox="0 0 46 43"><rect width="46" height="43" rx="3" fill="#347d6b"/><path d="M5.500 12 L16 5.500 L23 8 V27 L12 33.500 L5.500 31z" fill="#5fae6c"/><path d="M5.500 12 L9 13.500 V32.500 L5.500 31z" fill="#86cf8a"/><path d="M10 12.500 L23 5 L32 8.500 V30 L19 37 L10 33.500z" fill="#d9d9d9"/><path d="M10 12.500 L19 16 V37 L10 33.500z" fill="#f3f3f3"/><path d="M10 12.500 L23 5 L32 8.500 L19 16z" fill="#ececec"/><path d="M19 17 L31 10.500 L40.500 14 V31 L28.500 38.500 L19 35z" fill="#3f8fdc"/><path d="M19 17 L31 10.500 L40.500 14 L28.500 20.500z" fill="#8cc4f2"/><path d="M19 17 L28.500 20.500 V38.500 L19 35z" fill="#5aa5e8"/><path d="M41.03 28.87 L43.71 29.12 L43.71 31.68 L41.03 31.93 L40.11 34.15 L41.83 36.22 L40.02 38.03 L37.95 36.31 L35.73 37.23 L35.48 39.91 L32.92 39.91 L32.67 37.23 L30.45 36.31 L28.38 38.03 L26.57 36.22 L28.29 34.15 L27.37 31.93 L24.69 31.68 L24.69 29.12 L27.37 28.87 L28.29 26.65 L26.57 24.58 L28.38 22.77 L30.45 24.49 L32.67 23.57 L32.92 20.89 L35.48 20.89 L35.73 23.57 L37.95 24.49 L40.02 22.77 L41.83 24.58 L40.11 26.65z" fill="#fff"/><circle cx="34.2" cy="30.4" r="4.600" fill="#347d6b"/><circle cx="34.2" cy="30.4" r="2.700" fill="#fff"/><circle cx="34.2" cy="30.4" r="1.200" fill="#347d6b"/></svg>
<svg class="qi" style="left:128px;top:216px" viewBox="0 0 46 43"><rect width="46" height="43" rx="3" fill="#446285"/><path d="M8 13 L22 5.500 L33 9 V27 L19 35 L8 31z" fill="#e9dfd0"/><path d="M8 13 L19 17 V35 L8 31z" fill="#f4ede2"/><path d="M8 13 L22 5.500 L33 9 L19 17z" fill="#efe6d8"/><path d="M21 18.500 L32 12.500 V25 L21 31z" fill="#2f7fd0"/><path d="M10 18 l6 2 M10 22 l6 2 M10 26 l6 2" stroke="#b9ae9c" stroke-width="1"/><path d="M10.500 15 l5 1.800" stroke="#c0564a" stroke-width="1.200"/><path d="M40.83 25.47 L43.51 25.72 L43.51 28.28 L40.83 28.53 L39.91 30.75 L41.63 32.82 L39.82 34.63 L37.75 32.91 L35.53 33.83 L35.28 36.51 L32.72 36.51 L32.47 33.83 L30.25 32.91 L28.18 34.63 L26.37 32.82 L28.09 30.75 L27.17 28.53 L24.49 28.28 L24.49 25.72 L27.17 25.47 L28.09 23.25 L26.37 21.18 L28.18 19.37 L30.25 21.09 L32.47 20.17 L32.72 17.49 L35.28 17.49 L35.53 20.17 L37.75 21.09 L39.82 19.37 L41.63 21.18 L39.91 23.25z" fill="#fff"/><circle cx="34" cy="27" r="4.600" fill="#446285"/><circle cx="34" cy="27" r="2.700" fill="#fff"/><circle cx="34" cy="27" r="1.200" fill="#446285"/></svg>
<svg class="qi" style="left:28px;top:303px" viewBox="0 0 46 43"><rect width="46" height="43" rx="3" fill="#3f9968"/><path d="M8 13 L22 5.500 L33 9 V27 L19 35 L8 31z" fill="#e9dfd0"/><path d="M8 13 L19 17 V35 L8 31z" fill="#f4ede2"/><path d="M8 13 L22 5.500 L33 9 L19 17z" fill="#efe6d8"/><path d="M21 18.500 L32 12.500 V25 L21 31z" fill="#2f7fd0"/><path d="M10 18 l6 2 M10 22 l6 2 M10 26 l6 2" stroke="#b9ae9c" stroke-width="1"/><path d="M10.500 15 l5 1.800" stroke="#c0564a" stroke-width="1.200"/><path d="M8 40 V30 q6 -4 12 -1 q5 -3 8 2 v9z" fill="#f4f6f2" opacity="0.950"/><path d="M41.03 28.87 L43.71 29.12 L43.71 31.68 L41.03 31.93 L40.11 34.15 L41.83 36.22 L40.02 38.03 L37.95 36.31 L35.73 37.23 L35.48 39.91 L32.92 39.91 L32.67 37.23 L30.45 36.31 L28.38 38.03 L26.57 36.22 L28.29 34.15 L27.37 31.93 L24.69 31.68 L24.69 29.12 L27.37 28.87 L28.29 26.65 L26.57 24.58 L28.38 22.77 L30.45 24.49 L32.67 23.57 L32.92 20.89 L35.48 20.89 L35.73 23.57 L37.95 24.49 L40.02 22.77 L41.83 24.58 L40.11 26.65z" fill="#fff"/><circle cx="34.2" cy="30.4" r="4.600" fill="#3f9968"/><circle cx="34.2" cy="30.4" r="2.700" fill="#fff"/><circle cx="34.2" cy="30.4" r="1.200" fill="#3f9968"/></svg>
<div class="ql" style="left:-4px;top:94px">指标说明</div>
<div class="ql" style="left:96px;top:94px">集群HA高级信息</div>
<div class="ql" style="left:-4px;top:180px">虚拟机容量预…</div>
<div class="ql" style="left:96px;top:180px">VMware Tools</div>
<div class="ql" style="left:-4px;top:267px">集群负载设置</div>
<div class="ql" style="left:96px;top:267px">宿主机负载设置</div>
<div class="ql" style="left:-4px;top:354px">虚拟机负载设置</div>
<div class="sb" style="left:205px;top:32px;height:347px;background:#f0f0f0"><i class="up" style="top:8px"></i><div class="thumb" style="top:17px;height:308px"></div><i class="dn" style="top:335px"></i></div>
<div class="sec" style="top:379px">智能策略</div>
<div class="abs" style="left:0;top:397px;width:220px;height:345px;background:#ececec;overflow:hidden">
<div class="card" style="top:5px;height:144px"><div class="t">高负载进程定位策略</div><svg class="abs" style="left:5px;top:28px" width="180" height="24" viewBox="-56.500 0 180 24"><rect x="-56" y="9.500" width="180" height="1.200" fill="#fafbfc"/><path d="M27 5 L38 17 Q40 11 54 10" fill="none" stroke="#7fb0e8" stroke-width="2.400"/><path d="M40 13 Q46 10 54 10" fill="none" stroke="#2f4a7a" stroke-width="1.600"/></svg><div class="chk" style="left:5px;top:59px"><svg width="20" height="19" viewBox="0 0 20 19"><path d="M2.500 10.500 L6 8.500 L8 12 Q12 5.500 17.500 2.500 L18.500 4 Q12.500 9.500 9 17.500 L7 17.500z" fill="#2f8a1c"/></svg></div><div class="chk" style="left:31px;top:59px"><svg width="20" height="19" viewBox="0 0 20 19"><path d="M2.500 10.500 L6 8.500 L8 12 Q12 5.500 17.500 2.500 L18.500 4 Q12.500 9.500 9 17.500 L7 17.500z" fill="#2f8a1c"/></svg></div><div class="chk" style="left:57px;top:59px"><svg width="20" height="19" viewBox="0 0 20 19"><path d="M2.500 10.500 L6 8.500 L8 12 Q12 5.500 17.500 2.500 L18.500 4 Q12.500 9.500 9 17.500 L7 17.500z" fill="#2f8a1c"/></svg></div><div class="chk" style="left:83px;top:59px"><svg width="20" height="19" viewBox="0 0 20 19"><path d="M2.500 10.500 L6 8.500 L8 12 Q12 5.500 17.500 2.500 L18.500 4 Q12.500 9.500 9 17.500 L7 17.500z" fill="#2f8a1c"/></svg></div><div class="chk" style="left:109px;top:59px"><svg width="20" height="19" viewBox="0 0 20 19"><path d="M2.500 10.500 L6 8.500 L8 12 Q12 5.500 17.500 2.500 L18.500 4 Q12.500 9.500 9 17.500 L7 17.500z" fill="#2f8a1c"/></svg></div><div class="chk" style="left:135px;top:59px"><svg width="20" height="19" viewBox="0 0 20 19"><rect x="1" y="0" width="18" height="8" fill="#f08a1e"/><text x="10" y="6.500" text-anchor="middle" font-family="Liberation Sans,sans-serif" font-size="6.500" font-weight="bold" fill="#fff2a8">new</text><path d="M4 11.500 L7 10 L8.500 12.500 Q11.500 8 16 5.500 L17 7 Q12 11 9.500 17.500 L7.500 17.500z" fill="#2f8a1c"/></svg></div><div class="chk" style="left:161px;top:59px"><svg width="20" height="19" viewBox="0 0 20 19"><circle cx="10" cy="9.500" r="8.500" fill="#555"/><path d="M10 9.500 V2 A7.500 7.500 0 0 0 3 12z" fill="#eee"/><circle cx="8" cy="7" r="1.500" fill="#555"/></svg></div><div class="abs" style="left:0;right:0;top:87px;border-top:1px solid #d5d5d5"></div><i class="abs" style="left:4px;top:100px;border:2.500px solid transparent;border-left:4px solid #111"></i><div class="red" style="top:94px">最近一次高负载进程定位策略策</div><div class="red" style="top:114px">略在 09月13 日00:00 被触发</div></div>
<div class="card" style="top:153px;height:143px"><div class="t">指标越界处理</div><svg class="abs" style="left:5px;top:28px" width="180" height="24" viewBox="-56.500 0 180 24"><rect x="-56" y="9.500" width="180" height="1.200" fill="#fafbfc"/><path d="M27 5 L38 17 Q40 11 54 10" fill="none" stroke="#7fb0e8" stroke-width="2.400"/><path d="M40 13 Q46 10 54 10" fill="none" stroke="#2f4a7a" stroke-width="1.600"/></svg><div class="chk" style="left:5px;top:59px"><svg width="20" height="19" viewBox="0 0 20 19"><path d="M2.500 10.500 L6 8.500 L8 12 Q12 5.500 17.500 2.500 L18.500 4 Q12.500 9.500 9 17.500 L7 17.500z" fill="#2f8a1c"/></svg></div><div class="chk" style="left:31px;top:59px"><svg width="20" height="19" viewBox="0 0 20 19"><path d="M2.500 10.500 L6 8.500 L8 12 Q12 5.500 17.500 2.500 L18.500 4 Q12.500 9.500 9 17.500 L7 17.500z" fill="#2f8a1c"/></svg></div><div class="chk" style="left:57px;top:59px"><svg width="20" height="19" viewBox="0 0 20 19"><path d="M2.500 10.500 L6 8.500 L8 12 Q12 5.500 17.500 2.500 L18.500 4 Q12.500 9.500 9 17.500 L7 17.500z" fill="#2f8a1c"/></svg></div><div class="chk" style="left:83px;top:59px"><svg width="20" height="19" viewBox="0 0 20 19"><path d="M2.500 10.500 L6 8.500 L8 12 Q12 5.500 17.500 2.500 L18.500 4 Q12.500 9.500 9 17.500 L7 17.500z" fill="#2f8a1c"/></svg></div><div class="chk" style="left:109px;top:59px"><svg width="20" height="19" viewBox="0 0 20 19"><path d="M2.500 10.500 L6 8.500 L8 12 Q12 5.500 17.500 2.500 L18.500 4 Q12.500 9.500 9 17.500 L7 17.500z" fill="#2f8a1c"/></svg></div><div class="chk" style="left:135px;top:59px"><svg width="20" height="19" viewBox="0 0 20 19"><rect x="1" y="0" width="18" height="8" fill="#f08a1e"/><text x="10" y="6.500" text-anchor="middle" font-family="Liberation Sans,sans-serif" font-size="6.500" font-weight="bold" fill="#fff2a8">new</text><path d="M4 11.500 L7 10 L8.500 12.500 Q11.500 8 16 5.500 L17 7 Q12 11 9.500 17.500 L7.500 17.500z" fill="#2f8a1c"/></svg></div><div class="chk" style="left:161px;top:59px"><svg width="20" height="19" viewBox="0 0 20 19"><circle cx="10" cy="9.500" r="8.500" fill="#555"/><path d="M10 9.500 V2 A7.500 7.500 0 0 0 3 12z" fill="#eee"/><circle cx="8" cy="7" r="1.500" fill="#555"/></svg></div><div class="abs" style="left:0;right:0;top:87px;border-top:1px solid #d5d5d5"></div><i class="abs" style="left:4px;top:100px;border:2.500px solid transparent;border-left:4px solid #111"></i><div class="red" style="top:94px">最近一次指标越界处理策略在</div><div class="red" style="top:114px">09月30 日16:15 被触发</div></div>
<div class="card" style="top:300px;height:142px"><div class="t">内存泄漏捕捉</div><svg class="abs" style="left:5px;top:28px" width="180" height="24" viewBox="-56.500 0 180 24"><rect x="-56" y="9.500" width="180" height="1.200" fill="#fafbfc"/><path d="M27 5 L38 17 Q40 11 54 10" fill="none" stroke="#7fb0e8" stroke-width="2.400"/><path d="M40 13 Q46 10 54 10" fill="none" stroke="#2f4a7a" stroke-width="1.600"/></svg><div class="chk" style="left:5px;top:59px"><svg width="20" height="19" viewBox="0 0 20 19"><path d="M2.500 10.500 L6 8.500 L8 12 Q12 5.500 17.500 2.500 L18.500 4 Q12.500 9.500 9 17.500 L7 17.500z" fill="#2f8a1c"/></svg></div><div class="chk" style="left:31px;top:59px"><svg width="20" height="19" viewBox="0 0 20 19"><path d="M2.500 10.500 L6 8.500 L8 12 Q12 5.500 17.500 2.500 L18.500 4 Q12.500 9.500 9 17.500 L7 17.500z" fill="#2f8a1c"/></svg></div><div class="chk" style="left:57px;top:59px"><svg width="20" height="19" viewBox="0 0 20 19"><path d="M2.500 10.500 L6 8.500 L8 12 Q12 5.500 17.500 2.500 L18.500 4 Q12.500 9.500 9 17.500 L7 17.500z" fill="#2f8a1c"/></svg></div><div class="chk" style="left:83px;top:59px"><svg width="20" height="19" viewBox="0 0 20 19"><path d="M2.500 10.500 L6 8.500 L8 12 Q12 5.500 17.500 2.500 L18.500 4 Q12.500 9.500 9 17.500 L7 17.500z" fill="#2f8a1c"/></svg></div><div class="chk" style="left:109px;top:59px"><svg width="20" height="19" viewBox="0 0 20 19"><path d="M2.500 10.500 L6 8.500 L8 12 Q12 5.500 17.500 2.500 L18.500 4 Q12.500 9.500 9 17.500 L7 17.500z" fill="#2f8a1c"/></svg></div><div class="chk" style="left:135px;top:59px"><svg width="20" height="19" viewBox="0 0 20 19"><rect x="1" y="0" width="18" height="8" fill="#f08a1e"/><text x="10" y="6.500" text-anchor="middle" font-family="Liberation Sans,sans-serif" font-size="6.500" font-weight="bold" fill="#fff2a8">new</text><path d="M4 11.500 L7 10 L8.500 12.500 Q11.500 8 16 5.500 L17 7 Q12 11 9.500 17.500 L7.500 17.500z" fill="#2f8a1c"/></svg></div><div class="chk" style="left:161px;top:59px"><svg width="20" height="19" viewBox="0 0 20 19"><circle cx="10" cy="9.500" r="8.500" fill="#555"/><path d="M10 9.500 V2 A7.500 7.500 0 0 0 3 12z" fill="#eee"/><circle cx="8" cy="7" r="1.500" fill="#555"/></svg></div></div>
</div>
<div class="sb" style="left:205px;top:397px;height:345px;background:#f0f0f0"><i class="up" style="top:7px"></i><div class="thumb" style="top:17px;height:72px"></div><i class="dn" style="top:335px"></i></div>
</div>

<div id="foot">©2015 上海北塔软件股份有限公司 版权所有</div>
<div class="abs" style="left:1506px;top:5px;width:400px;height:33px;background:#3a3a3a;border-radius:5px;color:#fff;font-size:12px;line-height:33px;white-space:nowrap"><svg class="abs" style="left:22px;top:8px" width="20" height="19" viewBox="0 0 20 19"><path d="M9 1 a1.300 1.300 0 0 1 2.600 0 q4.500 1.500 4.500 7 q0 3.500 2.400 5.500 h-16.500 q2.500 -2 2.500 -5.500 q0 -5.500 4.500 -7z" fill="#f39316"/><circle cx="10.300" cy="16" r="1.800" fill="#f39316"/><circle cx="16.500" cy="2.500" r="1" fill="#f39316"/></svg><span class="abs" style="left:52px;letter-spacing:.2px">16:18</span><span class="abs" style="left:93px;letter-spacing:.15px">2018-09-30 15:46:19您收到一个撤销告警通知…</span></div>
<div class="abs" style="left:1530px;top:794px;font-size:20px;line-height:26px;color:rgba(135,135,135,.45);white-space:nowrap;letter-spacing:.2px">激活 <span style="font-size:22px">Windows</span></div>
<div class="abs" style="left:1530px;top:819px;font-size:15px;line-height:20px;color:rgba(135,135,135,.45);white-space:nowrap;letter-spacing:.1px">转到“控制面板”中的“系统”以激活 <span style="font-size:16.500px">Windows</span>。</div>
<div class="abs" style="left:1622px;top:5px;width:14px;height:10px;border:1px solid #151515;border-radius:1px"></div>
<div class="abs" style="left:1644px;top:4px;white-space:nowrap;font-size:12px;color:#0c0c0c;line-height:16px;letter-spacing:.1px">为达最佳浏览效果，建议使用1920*1080分辨率</div>


</body>
</html>
